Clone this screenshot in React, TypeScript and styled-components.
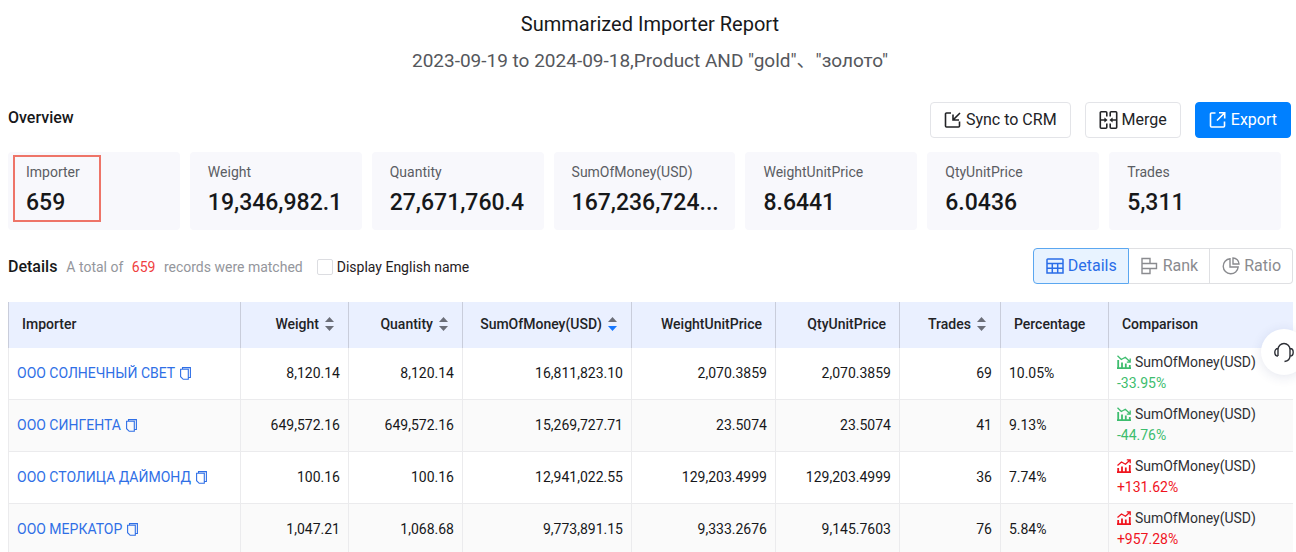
import React from "react";
import styled, { createGlobalStyle, css } from "styled-components";

const GlobalStyle = createGlobalStyle`
  *, *::before, *::after { box-sizing: border-box; }
  body {
    margin: 0;
    background: #fff;
    color: #1f2023;
    font-family: Roboto, "Noto Sans CJK SC", sans-serif;
    font-size: 14px;
    line-height: 20px;
  }
  button, input { font: inherit; color: inherit; margin: 0; }
`;

const Page = styled.main`
  height: 100vh;
  overflow-x: hidden;
  overflow-y: auto;
  scrollbar-width: none;
  padding: 10px 3px 0 8px;
`;

const ReportHeader = styled.header`
  text-align: center;
  padding-right: 1px;
`;

const Title = styled.h1`
  margin: 0;
  font-size: 20px;
  line-height: 28px;
  font-weight: 400;
  color: #17181a;
`;

const Criteria = styled.p`
  margin: 9px 0 0;
  font-size: 19px;
  line-height: 28px;
  color: #55575c;
`;

const OverviewBar = styled.div`
  display: flex;
  justify-content: space-between;
  align-items: center;
  margin-top: 27px;
  padding-right: 2px;
`;

const SectionTitle = styled.h2`
  margin: 0;
  font-size: 16px;
  line-height: 20px;
  font-weight: 500;
  color: #17181a;
`;

const OverviewTitle = styled(SectionTitle)`
  padding-bottom: 4px;
`;

const Actions = styled.div`
  display: flex;
  gap: 14px;
`;

const ActionButton = styled.button<{ $primary?: boolean }>`
  display: flex;
  align-items: center;
  gap: 4px;
  height: 36px;
  padding: 0 13px;
  border: 1px solid ${(p) => (p.$primary ? "#0080ff" : "#e3e4e8")};
  border-radius: 4px;
  background: ${(p) => (p.$primary ? "#0080ff" : "#fff")};
  color: ${(p) => (p.$primary ? "#fff" : "#222326")};
  font-size: 16px;
  cursor: pointer;
`;

const Cards = styled.div`
  display: grid;
  grid-template-columns: 172fr 172fr 172fr 182fr 172fr 172fr 172fr;
  gap: 10px;
  margin-top: 14px;
  padding-right: 12px;
`;

const Card = styled.section`
  position: relative;
  min-width: 0;
  height: 78px;
  padding: 10px 18px;
  border-radius: 4px;
  background: #f8f8fc;
`;

const Highlight = styled.div`
  position: absolute;
  inset: 3px auto auto 5px;
  width: 88px;
  height: 67px;
  border: 2px solid #ee7468;
`;

const CardLabel = styled.div`
  color: #5b5d63;
`;

const CardValue = styled.div`
  margin-top: 7px;
  font-size: 23px;
  line-height: 28px;
  font-weight: 500;
  color: #17181a;
  white-space: nowrap;
`;

const DetailsBar = styled.div`
  display: flex;
  align-items: center;
  justify-content: space-between;
  margin-top: 18px;
`;

const DetailsInfo = styled.div`
  display: flex;
  align-items: center;
  padding-top: 2px;
`;

const MatchText = styled.span`
  margin-left: 9px;
  color: #94969c;
`;

const MatchCount = styled.span`
  margin: 0 5px;
  color: #f04040;
`;

const CheckLabel = styled.label`
  display: flex;
  align-items: center;
  gap: 4px;
  margin-left: 14px;
`;

const Check = styled.input`
  appearance: none;
  width: 16px;
  height: 16px;
  border: 1px solid #dcdde1;
  border-radius: 2px;
  background: #fff;
`;

const Segments = styled.div`
  display: flex;
`;

const Segment = styled.button<{ $active?: boolean }>`
  display: flex;
  align-items: center;
  gap: 4px;
  height: 36px;
  padding: 0 11px 0 12px;
  border: 1px solid #dfe0e3;
  border-left-width: 0;
  background: #fff;
  color: #8a8b8f;
  font-size: 16px;
  cursor: pointer;
  &:first-child { border-left-width: 1px; border-radius: 4px 0 0 4px; }
  &:last-child { border-radius: 0 4px 4px 0; }
  ${(p) =>
    p.$active &&
    css`
      border-color: #5ba7f0;
      background: #e8f3ff;
      color: #2a6de8;
    `}
`;

const Table = styled.table`
  width: 100%;
  margin-top: 18px;
  border-collapse: separate;
  border-spacing: 0;
  table-layout: fixed;
`;

const HeadCell = styled.th<{ $right?: boolean }>`
  height: 46px;
  padding: 0 13px 3px;
  border-left: 1px solid #c9cddb;
  background: #eaf0ff;
  color: #222326;
  font-weight: 500;
  text-align: ${(p) => (p.$right ? "right" : "left")};
  white-space: nowrap;
`;

const HeadContent = styled.span`
  display: inline-flex;
  align-items: center;
  gap: 6px;
`;

const Row = styled.tr`
  background: #fff;
  &:nth-child(even) { background: #fafafa; }
`;

const Cell = styled.td<{ $right?: boolean }>`
  height: 52px;
  padding: 0 8px 1px;
  border-left: 1px solid #ebebed;
  border-bottom: 1px solid #ebebed;
  color: #17181a;
  text-align: ${(p) => (p.$right ? "right" : "left")};
  white-space: nowrap;
`;

const Company = styled.div`
  display: flex;
  align-items: center;
  gap: 5px;
  color: #2f6fe6;
`;

const CompanyLink = styled.a`
  color: inherit;
  text-decoration: none;
`;

const IconButton = styled.button`
  display: flex;
  padding: 0;
  border: 0;
  background: none;
  cursor: pointer;
`;

const Measure = styled.div`
  display: flex;
  align-items: center;
  gap: 4px;
  color: #2f3034;
`;

const Change = styled.div<{ $up: boolean }>`
  line-height: 22px;
  color: ${(p) => (p.$up ? "#f0141e" : "#3dbd6e")};
`;

const Support = styled.button`
  position: fixed;
  top: 329px;
  right: -11px;
  display: flex;
  align-items: center;
  justify-content: center;
  width: 46px;
  height: 46px;
  padding: 0;
  border: 0;
  border-radius: 50%;
  background: #fff;
  box-shadow: 0 2px 12px rgba(40, 60, 120, 0.12);
  cursor: pointer;
`;

const SyncIcon = () => (
  <svg width="18" height="18" viewBox="0 0 18 18" fill="none" stroke="currentColor" strokeWidth="1.6">
    <path d="M7 2H2.5a1 1 0 0 0-1 1v12a1 1 0 0 0 1 1h12a1 1 0 0 0 1-1v-4.5M16 2 9.5 8.5M9 3.5V9h6" />
  </svg>
);

const MergeIcon = () => (
  <svg width="19" height="20" viewBox="0 0 19 20" fill="none" stroke="currentColor" strokeWidth="1.6">
    <path d="M7.8 6.5V2.8a1 1 0 0 0-1-1H2.3a1 1 0 0 0-1 1v14.4a1 1 0 0 0 1 1h4.5a1 1 0 0 0 1-1v-3.7M11.2 6.5V2.8a1 1 0 0 1 1-1h4.5a1 1 0 0 1 1 1v14.4a1 1 0 0 1-1 1h-4.5a1 1 0 0 1-1-1v-3.7M1.3 10h5M17.7 10h-5" />
    <path d="M5.4 7.4 8.6 10l-3.2 2.6zM13.6 7.4 10.4 10l3.2 2.6z" fill="currentColor" stroke="none" />
  </svg>
);

const ExportIcon = () => (
  <svg width="18" height="18" viewBox="0 0 18 18" fill="none" stroke="currentColor" strokeWidth="1.6">
    <path d="M6.5 2h-4a1 1 0 0 0-1 1v12a1 1 0 0 0 1 1h12a1 1 0 0 0 1-1v-4.5M8 9.5 15.5 2M10 1.8h5.7v5.7" />
  </svg>
);

const GridIcon = () => (
  <svg width="18" height="18" viewBox="0 0 18 18" fill="none" stroke="currentColor" strokeWidth="1.5">
    <path d="M1.8 2h14.4a.8.8 0 0 1 .8.8V16H1V2.8a.8.8 0 0 1 .8-.8zM1 6.5h16M1 11.2h16M6.3 6.5V16M11.7 6.5V16" />
  </svg>
);

const RankIcon = () => (
  <svg width="18" height="18" viewBox="0 0 18 18" fill="none" stroke="currentColor" strokeWidth="1.4">
    <path d="M1 1.500h8v5H1zM1 6.500h14.500v5H1zM1 11.500h8v5H1z" />
  </svg>
);

const RatioIcon = () => (
  <svg width="18" height="18" viewBox="0 0 18 18" fill="none" stroke="currentColor" strokeWidth="1.4">
    <path d="M8 1.8a7.5 7.5 0 1 0 8.2 8.2H8zM11 1v6h6a6 6 0 0 0-6-6z" />
  </svg>
);

const CopyIcon = () => (
  <svg width="11" height="13" viewBox="0 0 11 13" fill="none" stroke="currentColor" strokeWidth="1.1">
    <path d="M2.5 2.2V.6h7.900v9.900H8.600M.6 2.300h7.700v10H3.200L.6 9.700z" />
  </svg>
);

const SortIcon = ({ down = false }: { down?: boolean }) => (
  <svg width="10" height="14" viewBox="0 0 10 14">
    <path d="M4.5 0 9 5H0z" fill="#6b6e78" />
    <path d="M4.5 14 0 9h9z" fill={down ? "#1677ff" : "#6b6e78"} />
  </svg>
);

const TrendIcon = ({ up }: { up: boolean }) => (
  <svg width="14" height="14" viewBox="0 0 14 14" fill="none" stroke={up ? "#f0141e" : "#3dbd6e"}>
    <path
      d={up ? "M0 13.2h14M1.2 13V9M5 13V7.5M8.8 13V8.5M12.8 13V6" : "M0 13.2h14M1.2 13V5M5 13V7.5M8.8 13V8.5M12.8 13v-3"}
      strokeWidth="1.8"
    />
    <path
      d={up ? "M.5 6.5 4.5 3l4 2.3L13 1M9.8.8h3.4v3.4" : "M.5.8 4.3 4.5l4-2.3L13 6.8M13.2 3.6v3.6H9.8"}
      strokeWidth="1.3"
    />
  </svg>
);

const HeadsetIcon = () => (
  <svg width="20" height="21" viewBox="0 0 20 21" fill="none" stroke="#2d2f36" strokeWidth="1.4">
    <path d="M4 14V7.5a6 6 0 0 1 12 0V14c0 3-1.8 5-5.5 5.5M4 6.5C2 6.5.8 8.2.8 10.2S2 14 4 14M16 6.5c2 0 3.2 1.7 3.2 3.7S18 14 16 14" />
  </svg>
);

const stats = [
  ["Importer", "659"],
  ["Weight", "19,346,982.1"],
  ["Quantity", "27,671,760.4"],
  ["SumOfMoney(USD)", "167,236,724..."],
  ["WeightUnitPrice", "8.6441"],
  ["QtyUnitPrice", "6.0436"],
  ["Trades", "5,311"],
];

type Column = { name: string; width: number; right?: boolean; sort?: "none" | "down" };

const columns: Column[] = [
  { name: "Importer", width: 232 },
  { name: "Weight", width: 108, right: true, sort: "none" },
  { name: "Quantity", width: 114, right: true, sort: "none" },
  { name: "SumOfMoney(USD)", width: 169, right: true, sort: "down" },
  { name: "WeightUnitPrice", width: 144, right: true },
  { name: "QtyUnitPrice", width: 124, right: true },
  { name: "Trades", width: 101, right: true, sort: "none" },
  { name: "Percentage", width: 108 },
  { name: "Comparison", width: 185 },
];
const totalWidth = columns.reduce((sum, c) => sum + c.width, 0);

const rows = [
  { name: "ООО СОЛНЕЧНЫЙ СВЕТ", values: ["8,120.14", "8,120.14", "16,811,823.10", "2,070.3859", "2,070.3859", "69"], share: "10.05%", change: "-33.95%" },
  { name: "ООО СИНГЕНТА", values: ["649,572.16", "649,572.16", "15,269,727.71", "23.5074", "23.5074", "41"], share: "9.13%", change: "-44.76%" },
  { name: "ООО СТОЛИЦА ДАЙМОНД", values: ["100.16", "100.16", "12,941,022.55", "129,203.4999", "129,203.4999", "36"], share: "7.74%", change: "+131.62%" },
  { name: "ООО МЕРКАТОР", values: ["1,047.21", "1,068.68", "9,773,891.15", "9,333.2676", "9,145.7603", "76"], share: "5.84%", change: "+957.28%" },
];

export default function App() {
  return (
    <Page>
      <GlobalStyle />
      <ReportHeader>
        <Title>Summarized Importer Report</Title>
        <Criteria>2023-09-19 to 2024-09-18,Product AND "gold"、"золото"</Criteria>
      </ReportHeader>

      <OverviewBar>
        <OverviewTitle>Overview</OverviewTitle>
        <Actions>
          <ActionButton type="button"><SyncIcon />Sync to CRM</ActionButton>
          <ActionButton type="button"><MergeIcon />Merge</ActionButton>
          <ActionButton type="button" $primary><ExportIcon />Export</ActionButton>
        </Actions>
      </OverviewBar>

      <Cards>
        {stats.map(([label, value], i) => (
          <Card key={label}>
            <CardLabel>{label}</CardLabel>
            <CardValue>{value}</CardValue>
            {i === 0 && <Highlight />}
          </Card>
        ))}
      </Cards>

      <DetailsBar>
        <DetailsInfo>
          <SectionTitle>Details</SectionTitle>
          <MatchText>
            A total of <MatchCount>659</MatchCount> records were matched
          </MatchText>
          <CheckLabel>
            <Check type="checkbox" />
            Display English name
          </CheckLabel>
        </DetailsInfo>
        <Segments>
          <Segment type="button" $active><GridIcon />Details</Segment>
          <Segment type="button"><RankIcon />Rank</Segment>
          <Segment type="button"><RatioIcon />Ratio</Segment>
        </Segments>
      </DetailsBar>

      <Table>
        <colgroup>
          {columns.map((c) => (
            <col key={c.name} style={{ width: `${(c.width / totalWidth) * 100}%` }} />
          ))}
        </colgroup>
        <thead>
          <tr>
            {columns.map((c) => (
              <HeadCell key={c.name} $right={c.right} scope="col">
                <HeadContent>
                  {c.name}
                  {c.sort && <SortIcon down={c.sort === "down"} />}
                </HeadContent>
              </HeadCell>
            ))}
          </tr>
        </thead>
        <tbody>
          {rows.map((r) => {
            const up = r.change.startsWith("+");
            return (
              <Row key={r.name}>
                <Cell>
                  <Company>
                    <CompanyLink href="#">{r.name}</CompanyLink>
                    <IconButton type="button" aria-label="Copy"><CopyIcon /></IconButton>
                  </Company>
                </Cell>
                {r.values.map((v, i) => (
                  <Cell key={i} $right>{v}</Cell>
                ))}
                <Cell>{r.share}</Cell>
                <Cell>
                  <Measure><TrendIcon up={up} />SumOfMoney(USD)</Measure>
                  <Change $up={up}>{r.change}</Change>
                </Cell>
              </Row>
            );
          })}
        </tbody>
      </Table>

      <Support type="button" aria-label="Support"><HeadsetIcon /></Support>
    </Page>
  );
}
